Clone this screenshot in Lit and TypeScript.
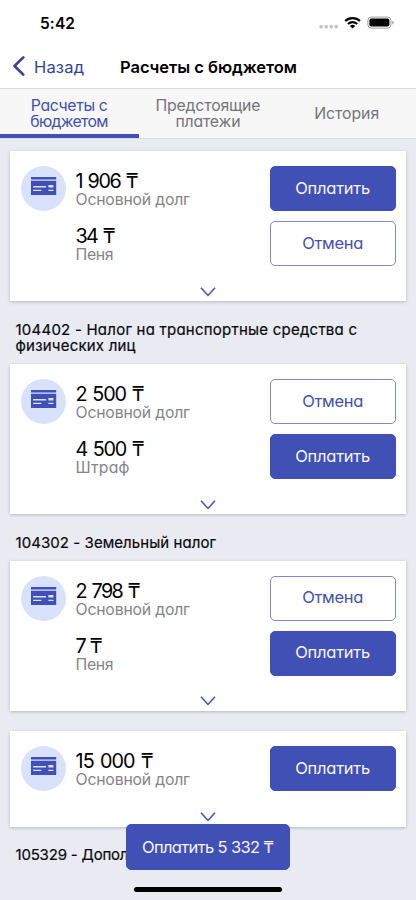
import { LitElement, html, css, svg } from "lit";
import { customElement, property } from "lit/decorators.js";

/** One line of text, tracked so that it takes exactly `span` pixels. */
@customElement("fit-text")
class FitText extends LitElement {
  @property() text = "";
  @property({ type: Number }) span = 0;
  static styles = css`
    :host { display: block; white-space: pre; }
    .line { display: inline-block; vertical-align: top; }
  `;
  render() {
    return html`<span class="line">${this.text}</span>`;
  }
  updated() {
    const line = this.renderRoot.querySelector<HTMLElement>(".line")!;
    line.style.letterSpacing = "0px";
    const spacing = (this.span - line.getBoundingClientRect().width) / (this.text.length - 1);
    line.style.letterSpacing = `${spacing}px`;
    line.style.marginRight = `${-spacing}px`;
  }
}

const fit = (text: string, span: number) => html`<fit-text .text=${text} .span=${span}></fit-text>`;

interface Row { sum: string; sumW: number; label: string; labelW: number; pay: boolean }
interface Group { title: [string, number][]; rows: Row[] }

const DEBT = { label: "Основной долг", labelW: 114.5 };
const GROUPS: Group[] = [
  { title: [], rows: [
    { sum: "1 906 ₸", sumW: 63, ...DEBT, pay: true },
    { sum: "34 ₸", sumW: 40, label: "Пеня", labelW: 38, pay: false } ] },
  { title: [["104402 - Налог на транспортные средства с", 341.5], ["физических лиц", 120]], rows: [
    { sum: "2 500 ₸", sumW: 69, ...DEBT, pay: false },
    { sum: "4 500 ₸", sumW: 69, label: "Штраф", labelW: 54, pay: true } ] },
  { title: [["104302 - Земельный налог", 200.5]], rows: [
    { sum: "2 798 ₸", sumW: 65, ...DEBT, pay: false },
    { sum: "7 ₸", sumW: 27, label: "Пеня", labelW: 38, pay: true } ] },
  { title: [], rows: [{ sum: "15 000 ₸", sumW: 78, ...DEBT, pay: true }] },
];

@customElement("app-root")
class AppRoot extends LitElement {
  static styles = css`
    :host {
      display: flex; flex-direction: column; position: relative; height: 900px; overflow: hidden;
      background: #eaeaf3; color: #0a0a0c; font-family: Inter, "Noto Sans", sans-serif;
      font-feature-settings: "cv11";
    }
    .status { height: 44px; background: #fff; display: flex; align-items: center; padding: 3px 21px 0 40px;
      box-sizing: border-box; justify-content: space-between; font: 600 15.5px/20px Inter, sans-serif; color: #000; }
    .status svg { margin-top: -1px; }
    .nav { height: 44px; background: #fff; display: grid; grid-template-columns: 120px 1fr; align-items: center;
      font-size: 16.5px; line-height: 20px; border-bottom: 1px solid #dcdcde; font-feature-settings: normal;
      box-sizing: content-box; }
    .back { display: flex; align-items: center; gap: 9px; padding-left: 12px; color: #35429c; }
    .back fit-text, .name { padding-top: 2px; }
    .name { font-weight: 600; color: #000; }
    .tabs { height: 49px; flex: none; display: grid; grid-template-columns: repeat(3, 1fr); background: #f7f7f8;
      border-bottom: 1px solid #dcdce2; font-size: 15.8px; line-height: 16px; color: #757577; }
    .tab { display: flex; flex-direction: column; align-items: center; justify-content: center;
      box-sizing: border-box; border-bottom: 4px solid transparent; padding-top: 4px; }
    .tab.on { color: #4150b4; border-color: #4150b4; }
    .list { padding: 12.2px 10px 0; display: flex; flex-direction: column; }
    .title { padding: 20.4px 5.5px 10.2px; font-size: 15px; line-height: 16px; -webkit-text-stroke: .2px #0a0a0c; }
    .gap { height: 20px; }
    .gap.first { height: 0; }
    .card { background: #fff; box-shadow: 0 1px 3px rgba(40, 40, 70, .25); padding: 15px 10.5px 0;
      display: flex; flex-direction: column; gap: 10px; }
    .row { display: grid; grid-template-columns: 45px 1fr 125.5px; column-gap: 10px; height: 45px; }
    .badge { width: 45px; height: 45px; border-radius: 50%; background: #d8e2fd; }
    .sum { font-size: 19.8px; line-height: 22px; padding-top: 4px; color: #000; word-spacing: 1.5px; }
    .label { font-size: 15.8px; line-height: 16px; color: #858587; }
    .btn { box-sizing: border-box; display: flex; align-items: center; justify-content: center; height: 45px;
      border: 1px solid #7f89cb; border-radius: 5px; color: #4150b4; font-size: 16.5px; padding-bottom: 2px; }
    .btn.pay { background: #4150b4; border-color: #4150b4; color: #f5f6ff; }
    .more { height: 25.3px; display: flex; justify-content: center; padding: 0 1px 0 0; }
    .more svg { margin-top: 10.5px; }
    .fab { position: absolute; left: 126px; top: 824.3px; width: 164px; height: 45.5px; padding-bottom: 1px; }
    .home { position: absolute; left: 134px; top: 886.5px; width: 148px; height: 5px; border-radius: 3px; background: #000; }
    svg { display: block; flex: none; }
  `;

  badge() {
    return html`<div class="badge"><svg width="45" height="45" viewBox="0 0 45 45">
      <path fill="#4150b4" d="M10 11h25.2v2.4H10zM10 14.7h25.2v14.2H10z"/>
      <path fill="#d8e2fd" d="M12.1 20h13v1.4h-13zM12.1 23.8h8.3v1.3h-8.3zM27.4 19h5v2.6h-5zM27.4 23.8h5v1.3h-5z"/>
    </svg></div>`;
  }

  card(rows: Row[]) {
    return html`<section class="card">
      ${rows.map((r, i) => html`<div class="row">
        ${i === 0 ? this.badge() : html`<span></span>`}
        <div><div class="sum">${fit(r.sum, r.sumW)}</div><div class="label">${fit(r.label, r.labelW)}</div></div>
        <div class="btn ${r.pay ? "pay" : ""}">${r.pay ? fit("Оплатить", 75) : fit("Отмена", 61)}</div>
      </div>`)}
      <div class="more"><svg width="16" height="10" viewBox="0 0 16 10">
        <path d="M1 .8l7 7.6 7-7.6" fill="none" stroke="#4150b4" stroke-width="1.5"/></svg></div>
    </section>`;
  }

  render() {
    return html`
      <header class="status">${fit("5:42", 35)}
        <svg width="76" height="16" viewBox="0 0 76 16">
          ${[2, 7, 12, 17].map((x) => svg`<circle cx=${x + 0.2} cy="11.7" r="1.9" fill="#c5c5c7"/>`)}
          <g fill="none" stroke="#000" stroke-width="2.2">
            <path d="M26.2 6a10.8 10.8 0 0 1 14.8 0M29 9a6.8 6.8 0 0 1 9.2 0"/></g>
          <path d="M30.9 10.9a4 4 0 0 1 5.4 0l-2.7 2.7z"/>
          <rect x="48.9" y="2.1" width="23" height="11" rx="3.2" fill="none" stroke="#9c9c9e"/>
          <rect x="50.4" y="3.6" width="20" height="8" rx="1.8"/>
          <path d="M73.4 5.7c1.8.7 1.8 3.2 0 3.9z" fill="#9c9c9e"/>
        </svg>
      </header>
      <nav class="nav">
        <div class="back"><svg width="13" height="20" viewBox="0 0 13 20">
          <path d="M11.3 1.4L2.5 10l8.8 8.6" fill="none" stroke="#35429c" stroke-width="2.6" stroke-linecap="round" stroke-linejoin="round"/></svg>
          ${fit("Назад", 50)}</div>
        <div class="name">${fit("Расчеты с бюджетом", 177)}</div>
      </nav>
      <div class="tabs">
        <div class="tab on">${fit("Расчеты с", 77)}${fit("бюджетом", 78)}</div>
        <div class="tab">${fit("Предстоящие", 105)}${fit("платежи", 65)}</div>
        <div class="tab">${fit("История", 65)}</div>
      </div>
      <main class="list">
        ${GROUPS.map((g, i) => html`
          ${g.title.length ? html`<div class="title">${g.title.map(([t, w]) => fit(t, w))}</div>`
            : html`<div class="gap ${i ? "" : "first"}"></div>`}
          ${this.card(g.rows)}`)}
        <div class="title">${fit("105329 - Допол", 113)}</div>
      </main>
      <div class="btn pay fab">${fit("Оплатить 5 332 ₸", 132)}</div>
      <div class="home"></div>`;
  }
}
